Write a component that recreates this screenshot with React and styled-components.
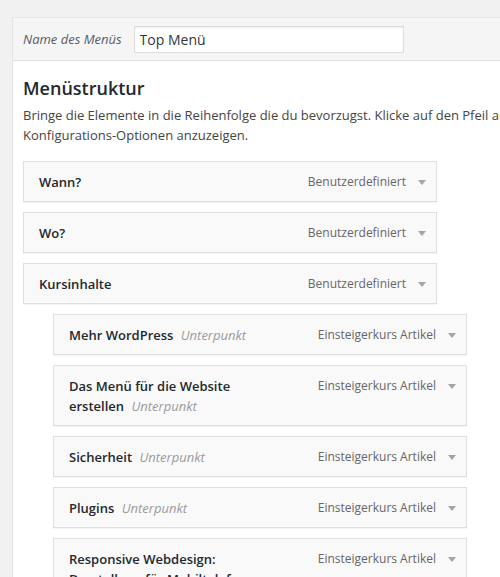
import React from "react";
import styled, { createGlobalStyle } from "styled-components";

const Global = createGlobalStyle`
  html, body {
    margin: 0;
    padding: 0;
    background: #f1f1f1;
    overflow: hidden;
    font-family: "Open Sans", "Noto Sans", sans-serif;
    font-size: 13px;
    color: #444;
  }
`;

const Page = styled.div`
  padding: 17px 0 0 12px;
  width: 1100px;
`;

const Panel = styled.div`
  width: 1000px;
  border: 1px solid #e5e5e5;
  box-shadow: 0 1px 1px rgba(0, 0, 0, 0.04);
  background: #fff;
`;

const Header = styled.div`
  display: flex;
  align-items: center;
  height: 42px;
  padding: 0 10px;
  background: #f5f5f5;
  border-bottom: 1px solid #dfdfdf;
`;

const Label = styled.label`
  font-style: italic;
  font-size: 13px;
  color: #555d66;
  margin-right: 12px;
  line-height: 20px;
`;

const NameInput = styled.input`
  box-sizing: border-box;
  width: 270px;
  height: 27px;
  margin-top: 1px;
  padding: 3px 5px;
  border: 1px solid #ddd;
  box-shadow: inset 0 1px 2px rgba(0, 0, 0, 0.07);
  background: #fff;
  font-family: "Open Sans", "Noto Sans", sans-serif;
  font-size: 14px;
  color: #32373c;
  outline: none;
`;

const Body = styled.div`
  padding: 10px 10px 20px;
`;

const Heading = styled.h3`
  margin: 5px 0 0;
  font-size: 18px;
  line-height: 25px;
  font-weight: 600;
  color: #23282d;
`;

const Intro = styled.p`
  margin: 5px 0 0;
  font-size: 13px;
  line-height: 19.5px;
  color: #444;
  white-space: nowrap;
`;

const List = styled.ul`
  list-style: none;
  margin: 16px 0 0;
  padding: 0;
  display: flex;
  flex-direction: column;
  gap: 10px;
`;

const Item = styled.li`
  box-sizing: border-box;
  width: 414px;
  margin-left: ${(p) => (p.$depth ? p.$depth * 30 : 0)}px;
  display: flex;
  align-items: flex-start;
  justify-content: space-between;
  padding: 10px 10px 9px 15px;
  border: 1px solid #dfdfdf;
  background: #f9f9f9;
  box-shadow: 0 1px 1px rgba(0, 0, 0, 0.04);
`;

const Title = styled.span`
  width: 200px;
  font-size: 13px;
  line-height: 20px;
  font-weight: 600;
  color: #23282d;
`;

const Sub = styled.span`
  margin-left: 4px;
  font-style: italic;
  font-weight: 400;
  color: #999;
`;

const Controls = styled.span`
  display: flex;
  align-items: center;
  gap: 12px;
  line-height: 20px;
`;

const Type = styled.span`
  font-size: 12px;
  color: #666;
`;

const Arrow = () => (
  <svg width="8" height="5" viewBox="0 0 8 5" aria-hidden="true">
    <path d="M0 0 H8 L4 5 Z" fill="#a0a5aa" />
  </svg>
);

const items = [
  { title: "Wann?", type: "Benutzerdefiniert", depth: 0 },
  { title: "Wo?", type: "Benutzerdefiniert", depth: 0 },
  { title: "Kursinhalte", type: "Benutzerdefiniert", depth: 0 },
  { title: "Mehr WordPress", type: "Einsteigerkurs Artikel", depth: 1 },
  { title: "Das Menü für die Website erstellen", type: "Einsteigerkurs Artikel", depth: 1 },
  { title: "Sicherheit", type: "Einsteigerkurs Artikel", depth: 1 },
  { title: "Plugins", type: "Einsteigerkurs Artikel", depth: 1 },
  { title: "Responsive Webdesign: Darstellung für Mobiltelefone", type: "Einsteigerkurs Artikel", depth: 1 },
];

export default function App() {
  return (
    <>
      <Global />
      <Page>
        <Panel>
          <Header>
            <Label htmlFor="menu-name">Name des Menüs</Label>
            <NameInput id="menu-name" defaultValue="Top Menü" />
          </Header>
          <Body>
            <Heading>Menüstruktur</Heading>
            <Intro>
              Bringe die Elemente in die Reihenfolge die du bevorzugst. Klicke auf den Pfeil auf der rechten Seite des Elements, um zusätzliche
              <br />
              Konfigurations-Optionen anzuzeigen.
            </Intro>
            <List>
              {items.map((it) => (
                <Item key={it.title} $depth={it.depth}>
                  <Title>
                    {it.title}
                    {it.depth > 0 && <> <Sub>Unterpunkt</Sub></>}
                  </Title>
                  <Controls>
                    <Type>{it.type}</Type>
                    <Arrow />
                  </Controls>
                </Item>
              ))}
            </List>
          </Body>
        </Panel>
      </Page>
    </>
  );
}
